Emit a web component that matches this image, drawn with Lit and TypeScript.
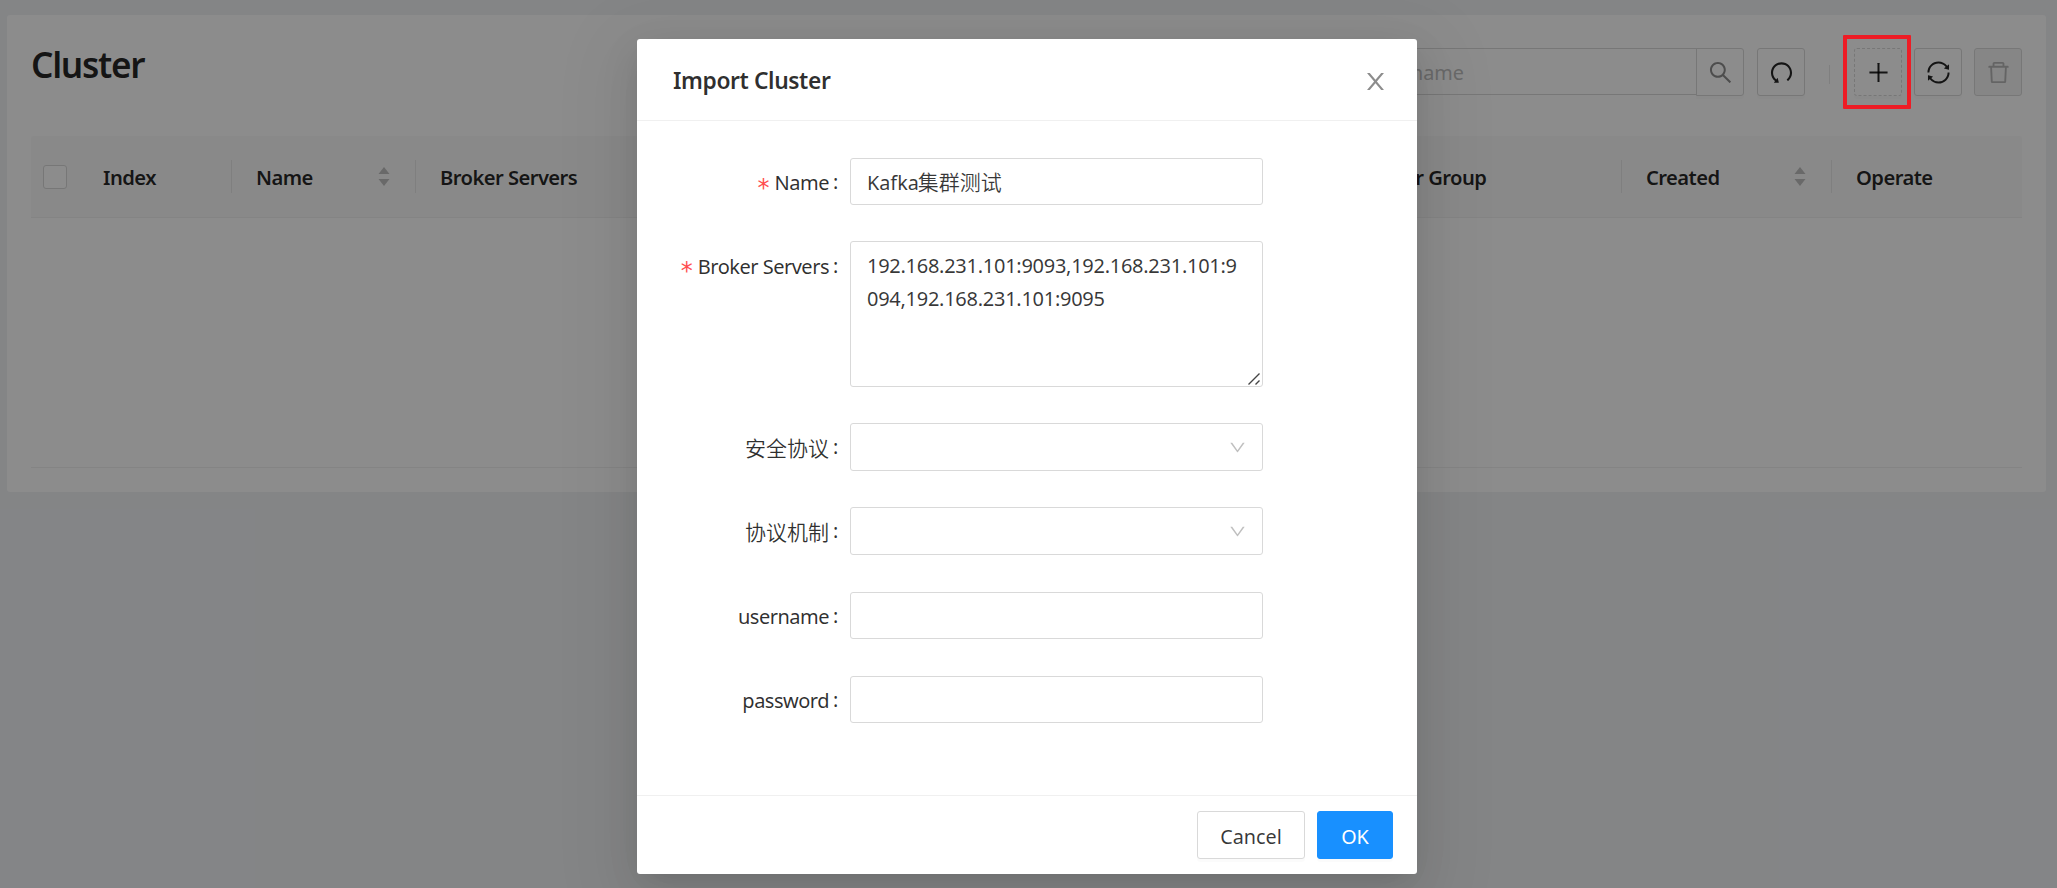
import { LitElement, html, css, svg, nothing } from "lit";
import { customElement, property } from "lit/decorators.js";

const ICONS: Record<string, unknown> = {
  plus: svg`<path d="M482 152h60q8 0 8 8v704q0 8-8 8h-60q-8 0-8-8V160q0-8 8-8z"/><path d="M176 474h672q8 0 8 8v60q0 8-8 8H176q-8 0-8-8v-60q0-8 8-8z"/>`,
  search: svg`<path d="M909.6 854.5L649.9 594.8C690.2 542.7 712 479 712 412c0-80.2-31.3-155.4-87.9-212.1-56.6-56.7-132-87.9-212.1-87.9s-155.5 31.3-212.1 87.9C143.2 256.5 112 331.8 112 412c0 80.1 31.3 155.5 87.9 212.1C256.5 680.8 331.8 712 412 712c67 0 130.6-21.8 182.7-62l259.7 259.6a8.2 8.2 0 0 0 11.6 0l43.6-43.5a8.2 8.2 0 0 0 0-11.6zM570.4 570.4C528 612.7 471.8 636 412 636s-116-23.3-158.4-65.6C211.3 528 188 471.8 188 412s23.3-116.1 65.6-158.4C296 211.3 352.2 188 412 188s116.1 23.2 158.4 65.6S636 352.2 636 412s-23.3 116.1-65.6 158.4z"/>`,
  undo: svg`<path transform="translate(1024 0) scale(-1 1)" d="M758.2 839.1C851.8 765.9 912 651.9 912 523.9 912 303 733.5 124.3 512.6 124 291.4 123.7 112 302.8 112 523.9c0 125.2 57.5 236.9 147.6 310.2 3.5 2.8 8.6 2.2 11.4-1.3l39.4-50.5c2.7-3.4 2.1-8.3-1.2-11.1-8.1-6.6-15.9-13.7-23.4-21.2a318.64 318.64 0 0 1-68.6-101.7C200.4 609 192 567.1 192 523.9s8.4-85.1 25.1-124.5c16.1-38.1 39.2-72.3 68.6-101.7 29.4-29.4 63.6-52.5 101.7-68.6C426.9 212.4 468.8 204 512 204s85.1 8.4 124.5 25.1c38.1 16.1 72.3 39.2 101.7 68.6 29.4 29.4 52.5 63.6 68.6 101.7 16.7 39.4 25.1 81.3 25.1 124.5s-8.4 85.1-25.1 124.5a318.64 318.64 0 0 1-68.6 101.7c-9.3 9.3-19.1 18-29.3 26L668.2 724a8 8 0 0 0-14.1 3l-39.6 162.2c-1.2 5 2.6 9.9 7.7 9.9l167 .8c6.7 0 10.5-7.7 6.3-12.9l-37.3-47.9z"/>`,
  sync: svg`<path d="M168 504.2c1-43.7 10-86.1 26.9-126 17.3-41 42.1-77.7 73.7-109.4S337 212.3 378 195c42.4-17.9 87.4-27 133.9-27s91.5 9.1 133.8 27A341.5 341.5 0 0 1 755 268.8c9.9 9.9 19.2 20.4 27.8 31.4l-60.2 47a8 8 0 0 0 3 14.1l175.7 43c5 1.2 9.9-2.6 9.9-7.7l.8-180.9c0-6.7-7.7-10.5-12.9-6.3l-56.4 44.1C765.8 155.1 646.2 92 511.8 92 282.7 92 96.3 275.6 92 503.8a8 8 0 0 0 8 8.2h60c4.4 0 7.9-3.5 8-7.8zm756 7.8h-60c-4.4 0-7.9 3.5-8 7.8-1 43.7-10 86.1-26.9 126-17.3 41-42.1 77.8-73.7 109.4A342.45 342.45 0 0 1 512.1 856a342.24 342.24 0 0 1-243.2-100.8c-9.9-9.9-19.2-20.4-27.8-31.4l60.2-47a8 8 0 0 0-3-14.1l-175.7-43c-5-1.2-9.9 2.6-9.9 7.7l-.7 181c0 6.7 7.7 10.5 12.9 6.3l56.4-44.1C258.2 868.9 377.8 932 512.2 932c229.2 0 415.5-183.7 419.8-411.8a8 8 0 0 0-8-8.2z"/>`,
  trash: svg`<path d="M360 184h-8c4.4 0 8-3.6 8-8v8h304v-8c0 4.4 3.6 8 8 8h-8v72h72v-80c0-35.3-28.7-64-64-64H352c-35.3 0-64 28.7-64 64v80h72v-72zm504 72H160c-17.7 0-32 14.3-32 32v32c0 4.4 3.6 8 8 8h60.4l24.7 523c1.6 34.1 29.8 61 63.9 61h454c34.2 0 62.3-26.8 63.9-61l24.7-523H888c4.4 0 8-3.6 8-8v-32c0-17.7-14.3-32-32-32zM731.3 840H292.7l-24.2-512h487l-24.2 512z"/>`,
  close: svg`<path d="M563.8 512l262.5-312.9c4.4-5.2.7-13.1-6.1-13.1h-79.8c-4.7 0-9.2 2.1-12.3 5.7L511.6 449.8 295.1 191.7c-3-3.6-7.5-5.7-12.3-5.7H203c-6.8 0-10.5 7.9-6.1 13.1L459.4 512 196.9 824.9A7.95 7.95 0 0 0 203 838h79.8c4.7 0 9.2-2.1 12.3-5.7l216.5-258.1 216.5 258.1c3 3.6 7.5 5.7 12.3 5.7h79.8c6.8 0 10.5-7.9 6.1-13.1L563.8 512z"/>`,
  down: svg`<path d="M884 256h-75c-5.1 0-9.9 2.5-12.9 6.6L512 654.2 227.9 262.6c-3-4.1-7.8-6.6-12.9-6.6h-75c-6.5 0-10.3 7.4-6.5 12.7l352.6 486.1c12.8 17.6 39 17.6 51.7 0l352.6-486.1c3.9-5.3.1-12.7-6.4-12.7z"/>`,
};

@customElement("ui-icon")
export class UiIcon extends LitElement {
  @property() name = "plus";
  static styles = css`
    :host { display: block; width: 27px; height: 27px; flex: none; }
    svg { display: block; width: 100%; height: 100%; fill: currentColor; }
  `;
  render() {
    return html`<svg viewBox="0 0 1024 1024">${ICONS[this.name]}</svg>`;
  }
}

@customElement("cluster-page")
export class ClusterPage extends LitElement {
  static styles = css`
    :host { display: block; padding: 15px 11px 0 7px; }
    .card {
      box-sizing: border-box; height: 477px; background: #fff; border-radius: 3px;
      padding: 0 24px; display: flex; flex-direction: column;
    }
    .top { height: 121px; display: flex; justify-content: space-between; align-items: flex-start; }
    h1 { margin: 25px 0 0; font-size: 35.2px; line-height: 48px; font-weight: 600; letter-spacing: -1.3px; }
    .tools { display: flex; align-items: flex-start; margin-top: 33px; }
    .search {
      box-sizing: border-box; width: 371px; height: 47px; border: 1px solid #d9d9d9; margin-right: -1px;
      padding-left: 17px; color: #bfbfbf; line-height: 47px; border-radius: 3px 0 0 3px;
      letter-spacing: -0.1px;
    }
    .btn {
      box-sizing: border-box; width: 48px; height: 48px; border: 1px solid #d9d9d9; border-radius: 3px;
      display: flex; align-items: center; justify-content: center; box-shadow: 0 3px 0 rgba(0,0,0,.015);
    }
    .find { border-radius: 0 3px 3px 0; color: rgba(0,0,0,.45); margin-right: 13px; }
    .rule { width: 1px; height: 19px; background: #e8e8e8; margin: 17px 24px 0; }
    .dashed { border-style: dashed; margin-right: 12px; }
    .sync { margin-right: 12px; }
    .off { background: #f5f5f5; color: rgba(0,0,0,.25); box-shadow: none; }
    .head {
      box-sizing: border-box; height: 82px; background: #fafafa; border-bottom: 1px solid #f0f0f0;
      display: grid; grid-template-columns: 49px 151px 184px 887px 319px 210px 1fr;
      align-items: center; font-weight: 600; border-radius: 3px 3px 0 0; letter-spacing: -0.56px; font-size: 20.2px;
    }
    .cell {
      height: 33px; box-sizing: border-box; padding: 0 25px 0 24px; line-height: 33px; white-space: nowrap;
      border-left: 1px solid #e8e8e8; display: flex; justify-content: space-between; align-items: center;
    }
    .text { padding-top: 2px; }
    .bare { border-left-color: transparent; padding-left: 22px; }
    .check {
      box-sizing: border-box; width: 24px; height: 24px; margin-left: 12px;
      border: 1px solid #d9d9d9; border-radius: 3px; background: #fff;
    }
    .sort { display: flex; flex-direction: column; gap: 5px; margin-right: .5px; }
    .sort svg { display: block; width: 12px; height: 7px; fill: #bfbfbf; }
    .body { height: 249px; border-bottom: 1px solid #f0f0f0; }
  `;

  private columns = [
    { label: "Index", kind: "bare", sortable: false },
    { label: "Name", kind: "", sortable: true },
    { label: "Broker Servers", kind: "", sortable: false },
    { label: "Consumer Group", kind: "", sortable: false },
    { label: "Created", kind: "", sortable: true },
    { label: "Operate", kind: "", sortable: false },
  ];

  render() {
    return html`
      <div class="card">
        <div class="top">
          <h1>Cluster</h1>
          <div class="tools">
            <div class="search">cluster name</div>
            <div class="btn find"><ui-icon name="search"></ui-icon></div>
            <div class="btn"><ui-icon name="undo"></ui-icon></div>
            <div class="rule"></div>
            <div class="btn dashed"><ui-icon name="plus"></ui-icon></div>
            <div class="btn sync"><ui-icon name="sync"></ui-icon></div>
            <div class="btn off"><ui-icon name="trash"></ui-icon></div>
          </div>
        </div>
        <div class="head">
          <div class="check"></div>
          ${this.columns.map(
            (c) => html`<div class="cell ${c.kind}">
              <span class="text">${c.label}</span>
              ${c.sortable
                ? html`<span class="sort">
                    <svg viewBox="0 0 12 7"><path d="M6 0L11.5 7H.5z" /></svg>
                    <svg viewBox="0 0 12 7"><path d="M6 7L.5 0h11z" /></svg>
                  </span>`
                : nothing}
            </div>`
          )}
        </div>
        <div class="body"></div>
      </div>
    `;
  }
}

@customElement("import-dialog")
export class ImportDialog extends LitElement {
  static styles = css`
    :host {
      display: flex; flex-direction: column; box-sizing: border-box; width: 780px; height: 835px;
      background: #fff; border-radius: 3px;
      box-shadow: 0 9px 24px -12px rgba(0,0,0,.12), 0 14px 42px rgba(0,0,0,.08), 0 18px 72px 24px rgba(0,0,0,.05);
    }
    header {
      box-sizing: border-box; height: 82px; border-bottom: 1px solid #f0f0f0; padding: 2px 28.5px 0 36px;
      display: flex; align-items: center; justify-content: space-between;
    }
    h2 { margin: 0; font-size: 22.8px; line-height: 33px; font-weight: 600; letter-spacing: -0.4px; color: rgba(0,0,0,.82); }
    header ui-icon { color: rgba(0,0,0,.45); margin-top: 2px; }
    form { flex: 1; padding-top: 37px; display: flex; flex-direction: column; }
    .row { display: flex; margin-bottom: 36px; }
    .row.tight { margin-bottom: 37px; }
    .label {
      width: 213px; height: 47px; line-height: 49px; display: flex; justify-content: flex-end;
      color: rgba(0,0,0,.82); white-space: nowrap;
    }
    .label::after { content: ":"; width: 5px; margin: -1px 12px 0 4px; }
    .low { line-height: 51px; }
    .latin { letter-spacing: -0.5px; font-size: 20px; }
    .req { color: #ff4d4f; margin-right: 5px; font: 24px/60px "DejaVu Sans", sans-serif; height: 47px; }
    .cjk { font-size: 21px; letter-spacing: 0; font-family: "Noto Sans CJK SC", sans-serif; font-weight: 350; }
    .field {
      box-sizing: border-box; width: 413px; height: 47px; border: 1px solid #d9d9d9; border-radius: 3px;
      padding: 0 16px; line-height: 47px; color: rgba(0,0,0,.78); white-space: nowrap;
    }
    .field .cjk { display: inline-block; line-height: 45px; vertical-align: top; margin-left: -1px; }
    .area {
      position: relative; height: 146px; padding-top: 7px; line-height: 33px; font-size: 20px; letter-spacing: -0.27px;
      white-space: normal; overflow-wrap: anywhere; word-break: break-all;
    }
    .grip { position: absolute; right: 2px; bottom: 1px; width: 12px; height: 12px; stroke: #444; stroke-width: 1.4; }
    .select { height: 48px; display: flex; align-items: center; justify-content: flex-end; }
    .select ui-icon { width: 19px; height: 19px; color: rgba(0,0,0,.25); margin-right: -.5px; }
    footer {
      box-sizing: border-box; height: 79px; border-top: 1px solid #f0f0f0; padding: 15px 24px 0 0;
      display: flex; justify-content: flex-end; gap: 12px;
    }
    .btn {
      box-sizing: border-box; height: 48px; line-height: 49px; text-align: center; border: 1px solid #d9d9d9;
      border-radius: 3px; box-shadow: 0 3px 0 rgba(0,0,0,.015); width: 108px; color: rgba(0,0,0,.78);
    }
    .ok { width: 76px; background: #1890ff; border-color: #1890ff; color: #fff; }
  `;

  private label(text: string, required = false, cjk = false, low = false) {
    return html`<div class="label ${low ? "low" : ""}">
      ${required ? html`<span class="req">*</span>` : nothing}<span class=${cjk ? "cjk" : "latin"}>${text}</span>
    </div>`;
  }

  render() {
    return html`
      <header><h2>Import Cluster</h2><ui-icon name="close"></ui-icon></header>
      <form>
        <div class="row">
          ${this.label("Name", true)}
          <div class="field">Kafka<span class="cjk">集群测试</span></div>
        </div>
        <div class="row">
          ${this.label("Broker Servers", true, false, true)}
          <div class="field area">192.168.231.101:9093,192.168.231.101:9094,192.168.231.101:9095
            <svg class="grip" viewBox="0 0 12 12"><path d="M.5 11.5l11-11M7.5 11.5l4-4" /></svg>
          </div>
        </div>
        <div class="row">
          ${this.label("安全协议", false, true)}
          <div class="field select"><ui-icon name="down"></ui-icon></div>
        </div>
        <div class="row tight">
          ${this.label("协议机制", false, true)}
          <div class="field select"><ui-icon name="down"></ui-icon></div>
        </div>
        <div class="row tight">${this.label("username")}<div class="field"></div></div>
        <div class="row">${this.label("password")}<div class="field"></div></div>
      </form>
      <footer><div class="btn">Cancel</div><div class="btn ok">OK</div></footer>
    `;
  }
}

@customElement("app-root")
export class AppRoot extends LitElement {
  static styles = css`
    :host {
      display: block; position: relative; width: 100%; height: 888px; overflow: hidden; background: #f0f2f5;
      font-family: "Noto Sans", "Noto Sans CJK SC", sans-serif; font-size: 19.8px; color: rgba(0,0,0,.85);
    }
    .mask {
      position: absolute; inset: 0; background: rgba(0,0,0,.45); box-sizing: border-box;
      display: flex; justify-content: center; align-items: flex-start; padding: 39px 3px 0 0;
    }
    .marker {
      position: absolute; left: 1843px; top: 35px; width: 68px; height: 74px;
      box-sizing: border-box; border: 4px solid #ee1c25; border-radius: 1px;
    }
  `;
  render() {
    return html`
      <cluster-page></cluster-page>
      <div class="mask"><import-dialog></import-dialog></div>
      <div class="marker"></div>
    `;
  }
}
